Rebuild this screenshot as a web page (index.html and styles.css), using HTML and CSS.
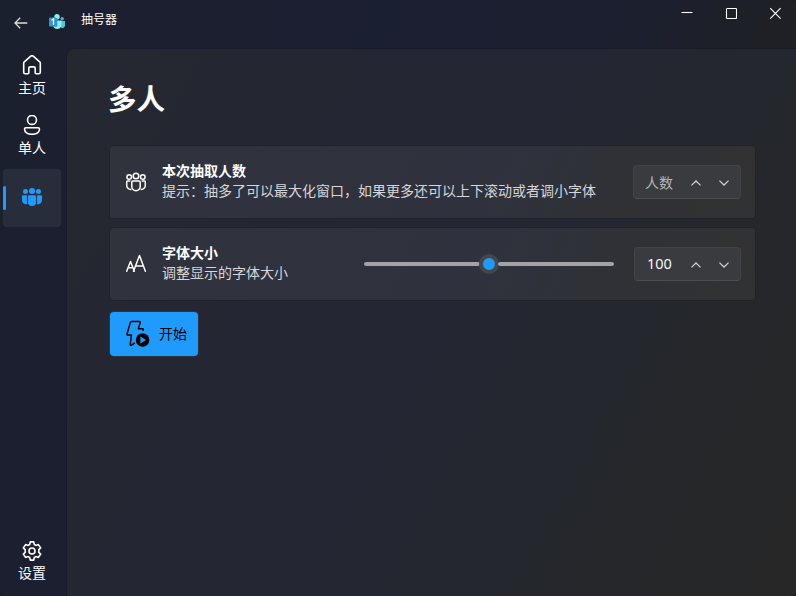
FILE: index.html
```html
<!DOCTYPE html>
<html lang="zh-CN">
<head>
<meta charset="utf-8">
<title>抽号器</title>
<link rel="stylesheet" href="styles.css">
</head>
<body>
<div class="window">
  <header class="titlebar">
    <button class="back" aria-label="返回">
      <svg width="14" height="12" viewBox="0 0 14 12" fill="none" stroke="currentColor" stroke-width="1.3"><path d="M13.3 6H1M6.2 .8L1 6l5.2 5.2"/></svg>
    </button>
    <svg class="logo" width="16" height="16" viewBox="0 0 16 16">
      <circle cx="13.2" cy="4.700" r="1.700" fill="#48b8d5"/>
      <path d="M12 7h4v4.500a2.500 2.500 0 0 1-4 2z" fill="#50c4df"/>
      <circle cx="8" cy="2.800" r="2.700" fill="#8bedf5"/>
      <path d="M4 6.500h8.500V11a4.300 4.800 0 0 1-8.500 0z" fill="#8bedf5"/>
      <path d="M6 4h2.300v8.800H6z" fill="#259bc4"/>
      <rect y="3.500" width="7.500" height="9" rx="1" fill="#3395cb"/>
      <path d="M2.500 6.200L4.500 5V11" fill="none" stroke="#fff" stroke-width="1.300"/>
    </svg>
    <h1 class="app-name">抽号器</h1>
    <div class="controls">
      <svg width="12" height="12" viewBox="0 0 12 12"><path d="M.5 5.500h11"/></svg>
      <svg width="12" height="12" viewBox="0 0 12 12"><rect x="1.500" y="1.500" width="10" height="10" rx=".7"/></svg>
      <svg width="12" height="12" viewBox="0 0 12 12"><path d="M1.200 1.200l10.400 10.400M11.600 1.200L1.200 11.600"/></svg>
    </div>
  </header>
  <div class="body">
    <nav class="nav">
      <a class="item">
        <svg width="20" height="20" viewBox="0 0 20 20"><path d="M1.700 8.100a1.800 1.800 0 0 1 .6-1.300l6.500-5.700a1.800 1.800 0 0 1 2.400 0l6.500 5.700a1.800 1.800 0 0 1 .6 1.300v9.200a1.400 1.400 0 0 1-1.400 1.400h-2.700a1 1 0 0 1-1-1v-4.400a1.400 1.400 0 0 0-1.400-1.400H8.200a1.400 1.400 0 0 0-1.400 1.400v4.400a1 1 0 0 1-1 1H3.100a1.400 1.400 0 0 1-1.400-1.400z"/></svg>
        <span>主页</span>
      </a>
      <a class="item">
        <svg width="20" height="20" viewBox="0 0 20 20"><circle cx="10" cy="4.900" r="4.500"/><path d="M3.900 12.700h12.200a1.400 1.400 0 0 1 1.400 1.400C17.500 17.300 14.500 19.300 10 19.300s-7.500-2-7.500-5.200a1.400 1.400 0 0 1 1.400-1.400z"/></svg>
        <span>单人</span>
      </a>
      <a class="item selected" aria-label="多人">
        <svg width="20" height="20" viewBox="0 0 20 20">
          <circle cx="10" cy="4" r="3"/><circle cx="3.500" cy="4.500" r="2.500"/><circle cx="16.500" cy="4.500" r="2.500"/>
          <path d="M7.200 8.200h5.600a1.300 1.300 0 0 1 1.300 1.300v5.400a4.100 4.100 0 0 1-8.200 0V9.500a1.300 1.300 0 0 1 1.300-1.300z"/>
          <path d="M1.300 8.200h3.900q-.3.700-.3 1.300v5.400q0 1 .4 2.100A4 4 0 0 1 0 13.200V9.500a1.300 1.300 0 0 1 1.300-1.300zM18.700 8.200h-3.900q.3.700.3 1.300v5.400q0 1-.4 2.100a4 4 0 0 0 5.300-3.800V9.500a1.300 1.300 0 0 0-1.300-1.300z"/>
        </svg>
      </a>
      <a class="item settings">
        <svg width="20" height="20" viewBox="0 0 20 20"><path d="M8.300.9h3.400l.6 2.600 1.600.9 2.500-.8 2.300 3.300-1.900 1.800v2.600l1.900 1.800-2.300 3.300-2.500-.8-1.600.9-.6 2.600H8.300l-.6-2.600-1.600-.9-2.500.8-2.300-3.300 1.900-1.800V8.700L1.300 6.900l2.300-3.300 2.500.8 1.600-.9z" stroke-linejoin="round"/><circle cx="10" cy="10" r="3"/></svg>
        <span>设置</span>
      </a>
    </nav>
    <main class="content">
      <h2 class="title">多人</h2>
      <section class="card">
        <svg class="card-icon" width="20" height="20" viewBox="0 0 20 20">
          <circle cx="10" cy="4" r="2.800"/><circle cx="3.200" cy="5" r="2.300"/><circle cx="16.800" cy="5" r="2.300"/>
          <path d="M6.800 9h6.400a1 1 0 0 1 1 1v4.500a4.200 4.200 0 0 1-8.400 0V10a1 1 0 0 1 1-1zM4.300 9H1.700a1 1 0 0 0-1 1v3.500a4 4 0 0 0 4.600 3.900M15.700 9h2.600a1 1 0 0 1 1 1v3.500a4 4 0 0 1-4.600 3.900"/>
        </svg>
        <div class="copy">
          <h3>本次抽取人数</h3>
          <p>提示：抽多了可以最大化窗口，如果更多还可以上下滚动或者调小字体</p>
        </div>
        <div class="number empty">
          <span class="value">人数</span>
          <svg width="10" height="6" viewBox="0 0 10 6"><path d="M.4 5.400L5 1l4.600 4.400"/></svg>
          <svg width="10" height="6" viewBox="0 0 10 6"><path d="M.4.600L5 5 9.600.600"/></svg>
        </div>
      </section>
      <section class="card">
        <svg class="card-icon" width="20" height="20" viewBox="0 0 20 20"><path d="M.7 17.200L4.500 7.500 8.300 17.200M2 13.800h5M7.500 17.200L13.500 1.500 19.400 17.200M9.400 12h8.200" stroke-linejoin="round" stroke-linecap="round"/></svg>
        <div class="copy">
          <h3>字体大小</h3>
          <p>调整显示的字体大小</p>
        </div>
        <div class="slider"><div class="track"></div><div class="thumb"></div><div class="track"></div></div>
        <div class="number narrow">
          <span class="value">100</span>
          <svg width="10" height="6" viewBox="0 0 10 6"><path d="M.4 5.400L5 1l4.600 4.400"/></svg>
          <svg width="10" height="6" viewBox="0 0 10 6"><path d="M.4.600L5 5 9.600.600"/></svg>
        </div>
      </section>
      <button class="start">
        <svg width="24" height="28" viewBox="0 0 24 28">
          <path d="M8.500 23.200L5.600 25.200Q4 26 4.300 24.300L5.400 15H2.100Q.8 15 1.100 13.700L4.300 2.600Q4.700 1.500 5.800 1.500h7.400q1.400 0 1 1.300L12.300 8.800h4.200q1.500.1.600 1.500" fill="none" stroke="#000" stroke-width="1.500" stroke-linecap="round" stroke-linejoin="round"/>
          <circle cx="16.600" cy="20" r="6.800"/>
          <path d="M14.400 16.600v6.800l5.700-3.400z" fill="#1f9bfd"/>
        </svg>
        <span>开始</span>
      </button>
    </main>
  </div>
</div>
</body>
</html>
```

FILE: styles.css
```css
* { box-sizing: border-box; }
body {
  margin: 0;
  color: #fff;
  background: #1c1f28;
  font: 14px/20px "Noto Sans CJK SC", sans-serif;
}
h1, h2, h3, p { margin: 0; }
button { border: 0; padding: 0; background: none; color: inherit; font: inherit; }
svg { display: block; flex: none; }
.window {
  display: flex;
  flex-direction: column;
  height: 596px;
  overflow: hidden;
  border-radius: 6px;
  background: linear-gradient(110deg, #1b202e 0%, #1b1f32 38%, #1b1f30 60%, #202122 84%);
}
.titlebar { display: flex; height: 49px; padding-left: 15px; }
.back { align-self: flex-start; margin: 17px 0 0 -1px; color: #dcdde0; }
.logo { margin: 14px 0 0 21px; }
.app-name { margin: 9px 0 0 16px; font-size: 12px; line-height: 20px; font-weight: 400; }
.controls { display: flex; gap: 32px; margin: 7px 15px 0 auto; }
.controls svg { fill: none; stroke: #fff; stroke-width: 1.1; }
.body { display: flex; flex: 1; min-height: 0; }
.nav { display: flex; flex-direction: column; gap: 2px; width: 67px; padding: 0 0 3px 3px; }
.item {
  display: flex;
  flex-direction: column;
  align-items: center;
  gap: 2px;
  width: 58px;
  height: 58px;
  padding-top: 6px;
  border-radius: 4px;
}
.item svg { fill: none; stroke: #fff; stroke-width: 1.6; }
.selected {
  position: relative;
  justify-content: center;
  padding: 0;
  background: #282d3b;
}
.selected::before {
  content: "";
  position: absolute;
  left: 0;
  top: 17px;
  width: 3px;
  height: 24px;
  border-radius: 2px;
  background: #1f9bfd;
}
.selected svg { margin-top: -2px; fill: #1f9bfd; stroke: none; }
.settings { margin-top: auto; padding-top: 6px; }
.settings span { margin-top: -1px; }
.content {
  flex: 1;
  padding: 29px 41px 0 43px;
  border-top-left-radius: 8px;
  box-shadow: 0 0 0 1px rgba(0, 0, 0, .1);
  background: linear-gradient(118deg, #25282f 0%, #242733 30%, #242733 52%, #25272b 78%, #272728 95%);
}
.title { margin: 0 0 28px -2px; font-size: 28.5px; line-height: 40px; font-weight: 700; }
.card {
  display: flex;
  align-items: center;
  height: 72px;
  margin-bottom: 10px;
  padding: 0 14px 0 16px;
  border-radius: 4px;
  box-shadow: 0 0 0 1px rgba(0, 0, 0, .1);
  background: linear-gradient(115deg, #30333c 0%, #2f323e 55%, #303135 80%, #323233 100%);
}
.card-icon { fill: none; stroke: #fff; stroke-width: 1.5; }
.copy { align-self: flex-start; margin: 14px 0 0 16px; white-space: nowrap; }
.copy h3 { font-size: 14px; line-height: 20px; font-weight: 700; }
.copy p { color: #d6d7da; }
.number {
  display: flex;
  align-items: center;
  gap: 18px;
  width: 108px;
  height: 34px;
  margin-left: auto;
  padding-left: 11px;
  border: 1px solid #424346;
  border-bottom-color: #4c4d50;
  border-radius: 4px;
  background: #3a3b3f;
}
.number svg { margin-top: 1px; fill: none; stroke: #d0d0d2; stroke-width: 1.3; }
.value { width: 28px; font-size: 14px; line-height: 20px; }
.empty .value { color: #b3b4b7; }
.narrow { width: 107px; margin-left: 20px; padding-left: 12px; }
.narrow .value { width: 26px; font: 14.5px/20px "Open Sans", "Noto Sans", sans-serif; }
.slider { display: flex; align-items: center; width: 250px; height: 20px; margin-left: auto; }
.track { flex: 1; height: 4px; border-radius: 2px; background: #a3a2a6; }
.thumb { width: 20px; height: 20px; margin: 0 -1px; border: 4px solid #454648; border-radius: 50%; background: #1f9bfd; }
.start {
  display: flex;
  align-items: center;
  gap: 9px;
  width: 88px;
  height: 44px;
  margin-top: 12px;
  padding-left: 16px;
  border-radius: 4px;
  box-shadow: 0 0 0 1px rgba(55, 61, 71, .6);
  background: #1f9bfd;
  color: #000;
}
.start span { margin-top: -2px; }
```
